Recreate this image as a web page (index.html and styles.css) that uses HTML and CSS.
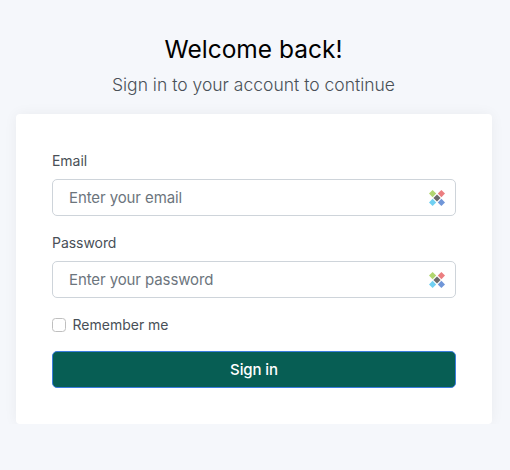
FILE: index.html
```html
<!doctype html>
<html lang="en">
<head>
    <meta charset="UTF-8">
    <meta name="viewport" content="width=device-width, initial-scale=1">
    <title>Sign In</title>
    <link rel="stylesheet" href="styles.css">
</head>
<body>
    <svg class="defs" width="0" height="0">
        <symbol id="pass-icon" viewBox="0 0 16 16">
            <path fill="#b1d670" d="M3.6 0 L7.2 3.6 L3.6 7.2 L0 3.6Z"></path>
            <path fill="#eb7e80" d="M12.4 0 L16 3.6 L12.4 7.2 L8.8 3.6Z"></path>
            <path fill="#70d0f2" d="M3.6 8.8 L7.2 12.4 L3.6 16 L0 12.4Z"></path>
            <path fill="#7096d8" d="M12.4 8.8 L16 12.4 L12.4 16 L8.8 12.4Z"></path>
            <path fill="#6b6b6b" d="M8 4.4 L11.6 8 L8 11.6 L4.4 8Z"></path>
        </symbol>
    </svg>
    <main class="sign-in">
        <div class="heading">
            <h1>Welcome back!</h1>
            <p class="lead">Sign in to your account to continue</p>
        </div>
        <form class="card">
            <label class="form-label" for="email">Email</label>
            <div class="form-control">
                <input id="email" type="email" placeholder="Enter your email">
                <svg class="icon"><use href="#pass-icon"></use></svg>
            </div>
            <label class="form-label" for="password">Password</label>
            <div class="form-control">
                <input id="password" type="password" placeholder="Enter your password">
                <svg class="icon"><use href="#pass-icon"></use></svg>
            </div>
            <label class="form-check">
                <input type="checkbox">
                <span>Remember me</span>
            </label>
            <button class="btn" type="button">Sign in</button>
        </form>
    </main>
</body>
</html>
```
FILE: styles.css
```css
* {
    box-sizing: border-box;
}

body {
    margin: 0;
    background: #f5f7fb;
    color: #495057;
    font: 14px/21px Inter, "Liberation Sans", sans-serif;
}

.defs {
    display: block;
}

.sign-in {
    padding: 34px 18px 0 16px;
}

.heading {
    padding-right: 1px;
    text-align: center;
}

h1 {
    margin: 0 0 7px;
    color: #000;
    font-size: 24.5px;
    font-weight: 400;
    line-height: 30px;
}

.lead {
    margin: 0 0 16px;
    font-size: 17.5px;
    font-weight: 300;
    line-height: 27px;
}

.card {
    height: 310px;
    padding: 36px;
    background: #fff;
    border-radius: 4px;
    box-shadow: 0 0 14px rgba(33, 37, 41, .05);
}

.form-label {
    display: block;
    margin-bottom: 8px;
    letter-spacing: -.05px;
}

.form-control {
    display: flex;
    align-items: center;
    height: 37px;
    margin-bottom: 16px;
    padding: 0 10px 0 16px;
    border: 1px solid #ced4da;
    border-radius: 5px;
}

.form-control input {
    flex: 1;
    min-width: 0;
    padding: 0;
    border: 0;
    outline: 0;
    background: none;
    font: 15px/23px Inter, "Liberation Sans", sans-serif;
    letter-spacing: -.1px;
}

.form-control input::placeholder {
    color: #6c757d;
    opacity: 1;
}

.icon {
    width: 16px;
    height: 16px;
}

.form-check {
    display: flex;
    align-items: center;
    gap: 6.5px;
    margin-bottom: 16px;
}

.form-check input {
    appearance: none;
    width: 14px;
    height: 14px;
    margin: 0;
    border: 1px solid #bfbfbf;
    border-radius: 3.5px;
}

.btn {
    display: block;
    width: 100%;
    height: 37px;
    padding: 0;
    border: 1px solid #3b7ddd;
    border-radius: 5px;
    background: #075e54;
    color: #fff;
    font: 500 15px/23px Inter, "Liberation Sans", sans-serif;
    letter-spacing: -.1px;
}
```
